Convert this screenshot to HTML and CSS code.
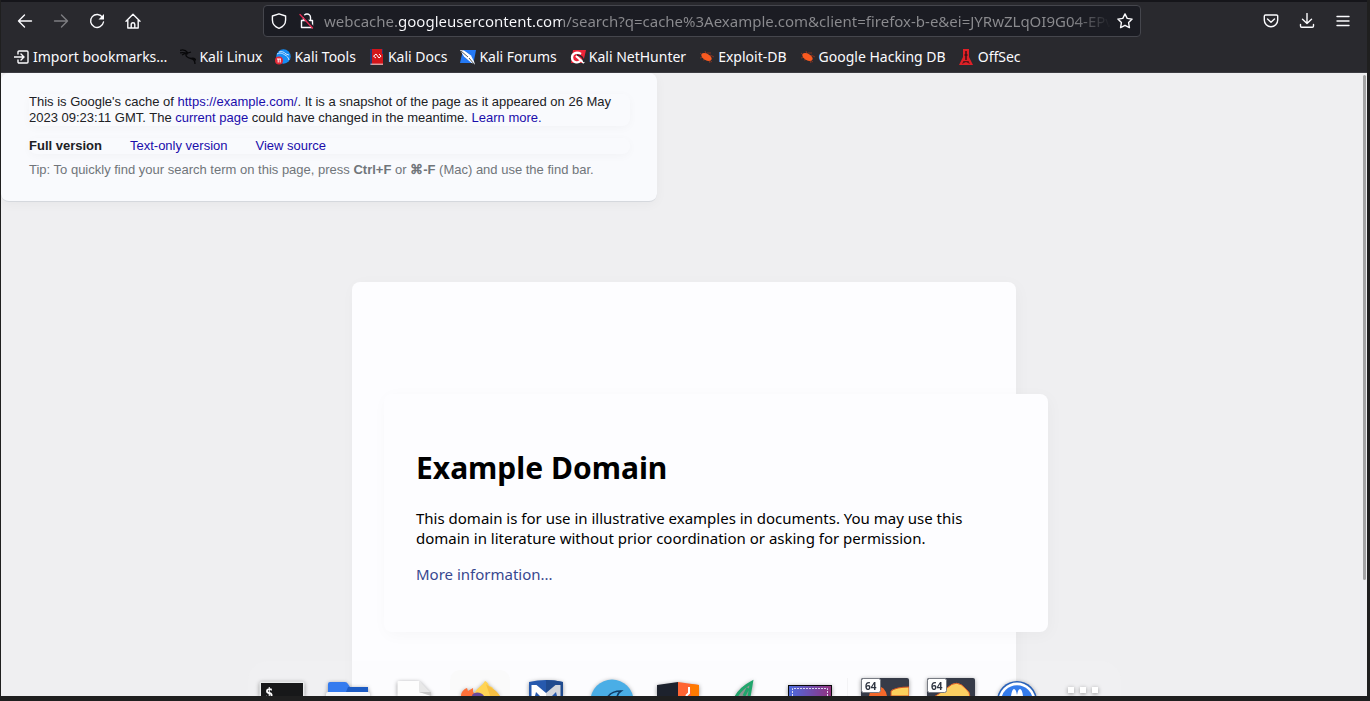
FILE: index.html
```html
<!DOCTYPE html>
<html lang="en">
<head>
<meta charset="utf-8">
<title>Example Domain</title>
<link rel="stylesheet" href="styles.css">
</head>
<body>
<div class="window">
<header class="chrome">
  <nav class="toolbar" aria-label="Navigation">
    <button class="tool" aria-label="Back"><svg width="16" height="16" viewBox="0 0 16 16"><path d="M14.500 8H1.500M7.500 2l-6 6 6 6"/></svg></button>
    <button class="tool dim" aria-label="Forward" disabled><svg width="16" height="16" viewBox="0 0 16 16"><path d="M1.500 8h13M8.500 2l6 6-6 6"/></svg></button>
    <button class="tool" aria-label="Reload"><svg width="16" height="16" viewBox="0 0 16 16"><path d="M13.6 4.5A6.5 6.5 0 1 0 14.5 9"/><path class="solid" d="M15 1v5.5H9.5z"/></svg></button>
    <button class="tool" aria-label="Home"><svg width="16" height="16" viewBox="0 0 16 16"><path d="M1 8.2 8 1.200 15 8.200M2.800 7v8h10.400V7M6.200 15v-3.500a1.800 1.800 0 0 1 3.600 0V15"/></svg></button>
    <div class="address">
      <svg class="ico" width="16" height="16" viewBox="0 0 16 16"><path d="M8 .8 14.600 3v4c0 4-3 7-6.600 8.300C4.400 14 1.400 11 1.400 7V3z"/></svg>
      <svg class="ico lock" width="16" height="16" viewBox="0 0 16 16"><path d="M4.500 7V4.500a3.500 3.500 0 0 1 7 0V7M2.500 7.500h11v7h-11z"/><path class="gap" d="M2.500.500 15 15"/><path class="slash" d="m1 1.500 12.500 13.500"/></svg>
      <input class="url" type="text" aria-label="Address" value="webcache.googleusercontent.com/search?q=cache%3Aexample.com&amp;client=firefox-b-e&amp;ei=JYRwZLqOI9G04-EPvMOq">
      <button class="star" aria-label="Bookmark this page"><svg width="16" height="16" viewBox="0 0 16 16"><path d="m8 .900 2.200 4.500 4.900.700-3.500 3.500.800 5L8 12.300l-4.400 2.300.800-5L.900 6.100l4.900-.700z"/></svg></button>
    </div>
    <button class="tool" aria-label="Save to Pocket"><svg width="16" height="16" viewBox="0 0 16 16"><path d="M2.500 2h11a1.200 1.200 0 0 1 1.200 1.200V7a6.700 6.700 0 0 1-13.400 0V3.200A1.200 1.200 0 0 1 2.500 2zM4.500 6 8 9.200 11.500 6"/></svg></button>
    <button class="tool" aria-label="Downloads"><svg width="16" height="16" viewBox="0 0 16 16"><path d="M8 .500v10M3.500 6.300 8 10.500l4.500-4.200M1.500 11.500v1.500a1.200 1.200 0 0 0 1.200 1.200h10.600a1.200 1.200 0 0 0 1.200-1.200v-1.500"/></svg></button>
    <button class="tool" aria-label="Menu"><svg width="16" height="16" viewBox="0 0 16 16"><path d="M2 3.500h12M2 8h12M2 12.500h12"/></svg></button>
  </nav>
  <nav class="bookmarks" aria-label="Bookmarks">
    <a href="#"><svg class="ico" width="16" height="16" viewBox="0 0 16 16"><path d="M4 5V3a1 1 0 0 1 1-1h8a1 1 0 0 1 1 1v10a1 1 0 0 1-1 1H5a1 1 0 0 1-1-1v-2M0 8h9M7 5l3 3-3 3"/></svg>Import bookmarks…</a>
    <a href="#"><svg width="16" height="16" viewBox="0 0 16 16"><path d="M0 1.500c3-1.500 6 0 8 2.500M0 4c3-1 5-.500 8 1M2 6l4-2M7 3.500C4 7 8 9 11 9.500S15 12 15 15M11 9.500c2-1 4 0 5 2M8 4l3-1" fill="none" stroke="#08080a" stroke-width="1.300"/></svg>Kali Linux</a>
    <a href="#"><svg width="16" height="16" viewBox="0 0 16 16"><circle cx="8.500" cy="7.500" r="7.200" fill="#168cf4"/><path d="M2 5c4-2 6 0 8 1s3 2 4 5M4 3c3-1 5 0 7 2l3 1" fill="none" stroke="#c7e4ff"/><circle cx="4" cy="11.500" r="4" fill="#e32836"/><path d="M2 10h4M3.200 10v3.500M5.200 10v3.500" stroke="#fff"/></svg>Kali Tools</a>
    <a href="#"><svg width="16" height="16" viewBox="0 0 16 16"><path d="M1 0h13v16H1z" fill="#d3151b"/><path d="M1 0h2v16H1zM13 0h1v5h-1z" fill="#27366d"/><path d="M1.500 15.200H14" stroke="#ddd"/><path d="M7 5 4.500 7.200 7 9M10 5l2 2.200L10 9M7 5l3 4" fill="none" stroke="#fff"/></svg>Kali Docs</a>
    <a href="#"><svg width="16" height="16" viewBox="0 0 16 16"><path d="M3 1h13l-2.500 13H0z" fill="#2479f5"/><path d="m0 1 4 .500 7 5 3 6 1 3-4-2-7-6z" fill="#fff"/><path d="m1 2 7 6M9 9l5 6" stroke="#202b38" stroke-width=".800"/></svg>Kali Forums</a>
    <a href="#"><svg width="16" height="16" viewBox="0 0 16 16"><path d="M3 1h13l-3 13H1z" fill="#ec2438"/><path d="M11 5C6 2 2 5 2 8.500c0 5 6 6 8 3.500M6 7l8 7" fill="none" stroke="#fff" stroke-width="2.300"/><path d="M7 6c5 0 6 3 7 7" fill="none" stroke="#27272b" stroke-width="1.500"/></svg>Kali NetHunter</a>
    <a href="#"><svg width="16" height="16" viewBox="0 0 16 16"><path d="m1 4 12 9M6 2l5 12M1 9l5-1M11 6l4 2M8 4h4M4 11l4-1" stroke="#a8391e" stroke-width=".700"/><ellipse cx="7.500" cy="8" rx="5.700" ry="3.200" transform="rotate(30 7.500 8)" fill="#fa5a20"/></svg>Exploit-DB</a>
    <a href="#"><svg width="16" height="16" viewBox="0 0 16 16"><path d="m1 4 12 9M6 2l5 12M1 9l5-1M11 6l4 2M8 4h4M4 11l4-1" stroke="#a8391e" stroke-width=".700"/><ellipse cx="7.500" cy="8" rx="5.700" ry="3.200" transform="rotate(30 7.500 8)" fill="#fa5a20"/></svg>Google Hacking DB</a>
    <a href="#"><svg width="16" height="16" viewBox="0 0 16 16"><path d="M4 0h6v8l4 8H0l4-8z" fill="#df2027"/><path d="M7 2v9M5.500 6h3" stroke="#3a1115" stroke-width="1.500"/><path d="m3 15 1.500-3h5l1.500 3-4-2z" fill="#5c1518"/></svg>OffSec</a>
  </nav>
</header>
<main class="page">
  <section class="cache">
    <p class="note">This is Google's cache of <a href="#">https://example.com/</a>. It is a snapshot of the page as it appeared on 26 May 2023 09:23:11 GMT. The <a href="#">current page</a> could have changed in the meantime. <a href="#">Learn more.</a></p>
    <div class="versions"><strong>Full version</strong><a href="#">Text-only version</a><a href="#">View source</a></div>
    <p class="tip">Tip: To quickly find your search term on this page, press <strong>Ctrl+F</strong> or <strong>⌘-F</strong> (Mac) and use the find bar.</p>
  </section>
  <div class="card outer">
    <article class="card inner">
      <h1>Example Domain</h1>
      <p>This domain is for use in illustrative examples in documents. You may use this domain in literature without prior coordination or asking for permission.</p>
      <p><a href="#">More information...</a></p>
    </article>
  </div>
  <div class="scrollbar"></div>
  <div class="dock-layer">
    <div class="dock">
      <button aria-label="Terminal"><svg width="48" height="24" viewBox="0 0 48 24"><rect x="1.500" y="9.500" width="45" height="30" rx="2" fill="#e9ebec"/><rect x="3" y="11" width="42" height="27" fill="#171819"/><text x="7" y="26" class="prompt">$</text></svg></button>
      <button aria-label="Files"><svg width="48" height="24" viewBox="0 0 48 24"><path d="M4 24V12q0-2 2-2h15q2 0 3 2l2 3h18v9z" fill="#347bef"/><path d="M24 15h20v5H22z" fill="#1d5cc4"/><path d="M2 24v-2q0-2 2-2h40q2 0 2 2v2z" fill="#f6f7f9"/></svg></button>
      <button aria-label="Text editor"><svg width="48" height="24" viewBox="0 0 48 24"><path d="M7.500 24V10q0-1 1-1H29l12 13v2z" fill="#fdfdfd"/><path d="M29 9v10q0 2 2 2h10z" fill="#e8e8e8"/><path d="M29 20h12v4z" fill="#c8c8c8"/></svg></button>
      <button class="active" aria-label="Firefox"><svg width="48" height="24" viewBox="0 0 48 24"><path d="M18 24c1-8 8-9 11-15 2 1 3 2 4 5l3 1 3 4 5 5z" fill="#ffd454"/><path d="M30 12c3 3 11 6 14 12H34z" fill="#f7bf42"/><path d="M5 24c0-4 3-7 6-8l1 3 5-3v4l4 4z" fill="#ff7139"/><path d="M16 24q0-3 5-3.500 5 0 7 3.500z" fill="#66499d"/></svg></button>
      <button aria-label="Metasploit"><svg width="48" height="24" viewBox="0 0 48 24"><path d="M7 24V10q17-4 34 0v14z" fill="#2659ad"/><path d="M24 8q9 0 17 2v14H24z" fill="#204b8f"/><path d="M9.500 24V13h5l9.500 8v3z" fill="#fff"/><path d="M24 24v-3l9.500-8h5v11z" fill="#d3d6dc"/><path d="m13 24 1-4 4 4zM35 24l-1-4-4 4z" fill="#2659ad"/></svg></button>
      <button aria-label="Wireshark"><svg width="48" height="24" viewBox="0 0 48 24"><circle cx="24" cy="29" r="21.500" fill="#4aaee6"/><path d="M19 26q4-7 14-7-3 2-4 6" fill="none" stroke="#103d68" stroke-width="1.600"/></svg></button>
      <button aria-label="Burp Suite"><svg width="48" height="24" viewBox="0 0 48 24"><path d="m3 13 21-3v14H3z" fill="#1d222d"/><path d="m24 10 21 3v11H24z" fill="#ff6533"/><path d="M36 12l9 1v11h-8z" fill="#ff7a00"/><path d="M35 15v6l-3 3" fill="none" stroke="#fff" stroke-width="2"/></svg></button>
      <button aria-label="Guymager"><svg width="48" height="24" viewBox="0 0 48 24"><path d="M15 24q5-9 16-14l-3 14z" fill="#8d9591"/><path d="M16 25q5-9 15.500-14.500L29 25M24 24l4-8" fill="none" stroke="#21a66c" stroke-width="3"/></svg></button>
      <button aria-label="Screenshot"><svg width="48" height="24" viewBox="0 0 48 24"><defs><linearGradient id="shot"><stop offset="0" stop-color="#4c6bdd"/><stop offset="1" stop-color="#91317f"/></linearGradient></defs><path d="M2 13h44v12H2z" fill="#0a0a0c"/><path d="M3 14h42v11H3z" fill="url(#shot)"/><path d="M6.500 24v-7.500h35V24" fill="none" stroke="#ddd8f0" stroke-dasharray="2 1"/></svg></button>
      <span class="divider"></span>
      <button aria-label="Archive 1"><svg width="48" height="24" viewBox="0 0 48 24"><rect y="6" width="48" height="30" rx="2" fill="#363b48"/><path d="M8 24q2-10 8-10 8 0 10 10z" fill="#f4692a"/><path d="M30 24v-5q5-4 18-4v9z" fill="#fdd15c" stroke="#d55222"/><rect x=".500" y="6.500" width="19" height="14" rx="2" fill="#fff" stroke="#777b83"/><text x="4" y="18" class="badge">64</text></svg></button>
      <button aria-label="Archive 2"><svg width="48" height="24" viewBox="0 0 48 24"><rect y="6" width="48" height="30" rx="2" fill="#363b48"/><path d="M7 25q5-3 13-9 10-10 19 1 4 3 4 8z" fill="#fbcf61" stroke="#da5b25"/><rect x=".500" y="6.500" width="19" height="14" rx="2" fill="#fff" stroke="#777b83"/><text x="4" y="18" class="badge">64</text></svg></button>
      <button aria-label="Motorola"><svg width="48" height="24" viewBox="0 0 48 24"><circle cx="24" cy="29" r="20" fill="#2861b8"/><circle cx="24" cy="29" r="18.500" fill="#fff"/><circle cx="24" cy="29" r="15.800" fill="#347cec"/><path d="M18 24q1-7 3-7t3 6q1-6 3-6t3 7z" fill="#fff"/></svg></button>
      <button aria-label="Show applications"><svg width="48" height="24" viewBox="0 0 48 24"><path d="M9 15h6v6H9zM21 15h6v6h-6zM33 15h6v6h-6z" fill="#fff"/></svg></button>
    </div>
  </div>
</main>
</div>
</body>
</html>
```
FILE: styles.css
```css
* { box-sizing: border-box; }
body { margin: 0; font-family: "Noto Sans", sans-serif; background: #1f1f1f; }
button { border: 0; padding: 0; background: none; color: inherit; font: inherit; }
a { text-decoration: none; }
.window { display: flex; flex-direction: column; height: 100vh; padding: 0 3px 5px 1px; }
.chrome { flex: none; background: #29292e; color: #fbfbfe; border-top: 2px solid #15151a; border-bottom: 1px solid #3c3c42; }
.toolbar { display: flex; align-items: center; height: 38px; padding: 0 6px; }
.tool { display: flex; align-items: center; justify-content: center; width: 36px; height: 32px; }
.tool svg, .star svg, .ico { fill: none; stroke: #fbfbfe; stroke-width: 1.400; stroke-linejoin: round; stroke-linecap: round; flex: none; }
.tool .solid { fill: #fbfbfe; stroke: none; }
.dim { opacity: 0.4; }
.address { display: flex; align-items: center; flex: 1; min-width: 0; height: 32px; margin: 0 112px; padding: 0 7px; gap: 12px; background: #1b1c23; border: 1px solid #45464d; border-radius: 4px; }
.lock .gap { stroke: #1b1c23; stroke-width: 2; }
.lock .slash { stroke: #e22850; }
.url { flex: 1; min-width: 0; margin: 0 -6px 0 -3px; padding: 0; border: 0; outline: 0; font: 15px/24px "Noto Sans", sans-serif; -webkit-text-fill-color: transparent; background: linear-gradient(90deg, #8b8b8f 0 74px, #fbfbfe 74px 238px, #8b8b8f 238px calc(100% - 40px), transparent 100%); -webkit-background-clip: text; background-clip: text; }
.star { display: flex; }
.bookmarks { display: flex; align-items: center; height: 32px; padding: 1px 13px 0; gap: 13px; font-size: 14px; line-height: 20px; white-space: nowrap; }
.bookmarks a { display: flex; align-items: center; gap: 3px; color: #fbfbfe; }
.bookmarks svg { flex: none; }

.page { position: relative; flex: 1; min-height: 0; overflow: hidden; background: #efeff1; }
.cache { width: 656px; max-width: 100%; padding: 21px 27px 23px 28px; border-bottom: 1px solid #d5d8dd; border-radius: 8px; background: #f9fafd; box-shadow: 0 2px 12px rgba(0, 0, 0, 0.04); font: 13px/16px "Liberation Sans", Arial, sans-serif; color: #202124; }
.cache p { margin: 0; }
.cache a { color: #1a0dab; }
.note, .versions { border-radius: 8px; box-shadow: 0 2px 10px rgba(0, 0, 0, 0.03); }
.versions { display: flex; gap: 28px; margin: 12px 0 8px; }
.cache .tip { color: #70757a; }
.card { width: 664px; margin: 80px auto; padding: 32px; border-radius: 8px; background: #fdfdff; box-shadow: 2px 3px 16px rgba(0, 0, 0, 0.03); font-size: 15px; line-height: 20px; color: #000; }
.outer { min-height: 600px; padding-top: 112px; }
.inner { margin: 0; }
.inner h1 { margin: 21px 0 20px; font-size: 30px; line-height: 41px; font-weight: 700; }
.inner p { margin: 16px 0; }
.inner h1 + p { margin-top: 0; }
.inner a { color: #38488f; }
.scrollbar { position: absolute; top: 2px; right: 1px; width: 3px; height: 505px; border-radius: 2px; background: #a3a3a4; }
.dock-layer { position: absolute; left: 0; right: 0; bottom: 0; display: flex; justify-content: center; overflow: hidden; }
.dock { display: flex; align-items: flex-end; gap: 18px; height: 35px; padding: 0 14px 0 10px; border-radius: 20px 20px 0 0; background: rgba(250, 250, 248, 0.15); }
.dock button { display: flex; }
.dock svg { filter: drop-shadow(0 1px 2px rgba(0, 0, 0, 0.4)); }
.dock .active { margin: 0 -6px; padding: 2px 6px 0; border-radius: 10px 10px 0 0; background: #fafafa; }
.divider { width: 1px; height: 18px; margin: 0 -5px; background: #f3f3f5; }
.prompt { font: 700 14px "DejaVu Sans Mono", monospace; fill: #fff; }
.badge { font: 700 10px "Noto Sans", sans-serif; fill: #303642; }
```
